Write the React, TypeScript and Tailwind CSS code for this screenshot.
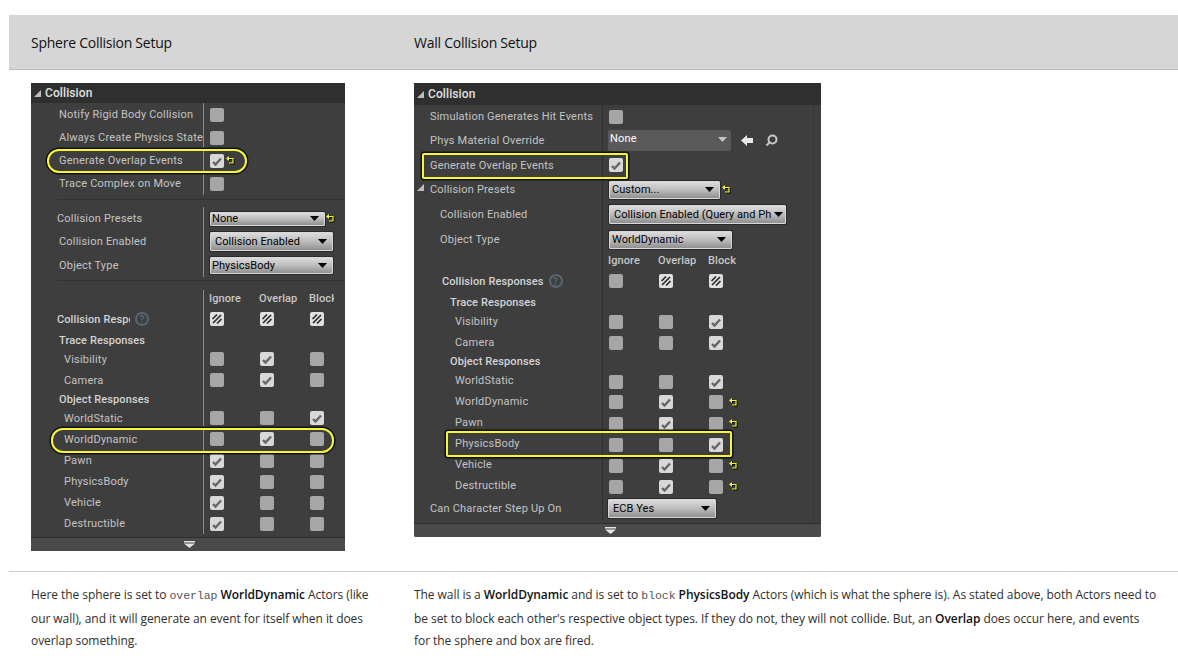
import React from "react";

type RowData = {
  h: number;
  label?: string;
  x?: number;
  dy?: number;
  bold?: boolean;
  tree?: boolean;
  checks?: number[];
  revert?: boolean;
  heads?: boolean;
  help?: boolean;
  clipLabel?: number;
  clipBlock?: boolean;
  control?: React.ReactNode;
};

function Revert({ className = "" }: { className?: string }) {
  return (
    <svg width="9" height="9" viewBox="0 0 9 9" className={`shrink-0 ${className}`} fill="none">
      <path d="M2 2.500H7V7H3" stroke="#000" strokeWidth="1.300" transform="translate(.8 .8)" />
      <path d="M0 2.500 3 0V5z" fill="#000" transform="translate(.6 .6)" />
      <path d="M0 2.500 3 0V5z" fill="#f6f62e" />
      <path d="M2 2.500H7V7H3" stroke="#f6f62e" strokeWidth="1.200" />
    </svg>
  );
}

function Checkbox({ state }: { state: number }) {
  if (state === 2) {
    return (
      <svg width="14" height="14" viewBox="0 0 14 14" className="shrink-0">
        <rect width="14" height="14" rx="2" fill="#e0e0e0" />
        <path d="M2.500 7 7 2.500M3 11 11 3M7 11.500 11.500 7" stroke="#2c2c2c" strokeWidth="1.700" />
      </svg>
    );
  }
  if (state === 1) {
    return (
      <svg width="14" height="14" viewBox="0 0 14 14" className="shrink-0">
        <rect width="14" height="14" rx="2" fill="#d8d8d8" />
        <path d="M3 8 5.500 10.500 11 4.500" stroke="#666666" strokeWidth="2.400" fill="none" />
      </svg>
    );
  }
  return <div className="h-[14px] w-[14px] shrink-0 rounded-[2px] bg-[#a6a6a6]" />;
}

function Caret({ color = "#000" }: { color?: string }) {
  return (
    <svg width="9" height="5" viewBox="0 0 9 5" className="shrink-0">
      <path d="M0 0h9L4.500 5z" fill={color} />
    </svg>
  );
}

function Dropdown({ text, w, h, pl = 2, pr = 5 }: { text: string; w: number; h: number; pl?: number; pr?: number }) {
  return (
    <div
      className="flex shrink-0 items-center justify-between gap-[3px] overflow-hidden whitespace-nowrap rounded-[1px] border border-[#d8d8d8] bg-gradient-to-b from-[#dcdcdc] via-[#bcbcbc] to-[#909090] text-[11px] leading-[13px] tracking-[0.05px] text-black shadow-[0_0_0_1px_#2a2a2a]"
      style={{ width: w, height: h, paddingLeft: pl, paddingRight: pr }}
    >
      <span className="overflow-hidden">{text}</span>
      <Caret />
    </div>
  );
}

function TreeArrow() {
  return (
    <svg width="7" height="7" viewBox="0 0 7 7" className="shrink-0">
      <path d="M7 0v7H0z" fill="#bdbdbd" />
    </svg>
  );
}

function HelpIcon() {
  return (
    <div className="flex h-[14px] w-[14px] shrink-0 items-center justify-center rounded-full border-2 border-[#566673] text-[10px] font-bold text-[#566673]">
      ?
    </div>
  );
}

function Row({ row, labelW, line }: { row: RowData; labelW: number; line: string }) {
  return (
    <div className="flex" style={{ height: row.h }}>
      <div
        className={`relative flex shrink-0 items-center overflow-hidden whitespace-nowrap border-r ${line} ${row.bold ? "font-medium tracking-[0.1px] text-[#d4d4d4]" : "text-[#c4c4c4]"}`}
        style={{ width: labelW, paddingLeft: row.x ?? 0 }}
      >
        {row.tree && (
          <span className="absolute left-[3px] top-[7px]">
            <TreeArrow />
          </span>
        )}
        <span className="overflow-hidden" style={{ width: row.clipLabel, paddingTop: row.dy ?? 1 }}>
          {row.label}
        </span>
        {row.help && (
          <span className="ml-[5px]">
            <HelpIcon />
          </span>
        )}
      </div>
      <div className="flex items-center gap-[36px] pl-[6px]">
        {row.heads && (
          <div className="-ml-[1px] flex pt-[1px] font-medium tracking-[0.1px] text-[#c8c8c8]">
            <span className="w-[50px]">Ignore</span>
            <span className="w-[50px]">Overlap</span>
            <span className={row.clipBlock ? "w-[25px] overflow-hidden" : ""}>Block</span>
          </div>
        )}
        {row.checks?.map((c, i) => <Checkbox key={i} state={c} />)}
        {row.revert && <Revert className="-ml-[30px]" />}
        {row.control}
      </div>
    </div>
  );
}

function PanelHeader({ h }: { h: number }) {
  return (
    <div className="flex items-center gap-[4px] bg-[#2f2f2f] pl-[3px] text-[12px] font-medium tracking-[0.1px] text-[#e0e0e0]" style={{ height: h }}>
      <TreeArrow />
      Collision
    </div>
  );
}

function PanelFooter({ pl }: { pl: number }) {
  return (
    <div className="flex h-[14px] border-t border-[#2e2e2e] bg-[#4a4a4a] pt-[3px]" style={{ paddingLeft: pl }}>
      <svg width="11" height="7" viewBox="0 0 11 7">
        <path d="M0 0h11v1.500H0zM0 2.500h11L5.500 7z" fill="#e4e4e4" />
      </svg>
    </div>
  );
}

function Highlight({ className }: { className: string }) {
  return (
    <div className={`pointer-events-none absolute border-2 border-[#f5f53c] shadow-[0_0_0_1.5px_#111] ${className}`} />
  );
}

const sphereTop: RowData[] = [
  { h: 23, label: "Notify Rigid Body Collision", x: 28, checks: [0] },
  { h: 23, label: "Always Create Physics State", x: 28, checks: [0] },
  { h: 23, label: "Generate Overlap Events", x: 28, checks: [1], control: <Revert className="-ml-[34px]" /> },
  { h: 23, label: "Trace Complex on Move", x: 28, checks: [0] },
];

const sphereMid: RowData[] = [
  {
    h: 23,
    label: "Collision Presets",
    x: 26,
    control: (
      <div className="flex items-center gap-[1px]">
        <Dropdown text="None" w={115} h={14} pl={1} />
        <Revert />
      </div>
    ),
  },
  { h: 23, label: "Collision Enabled", x: 28, control: <Dropdown text="Collision Enabled" w={123} h={19} pl={4} /> },
  { h: 24, label: "Object Type", x: 28, dy: 3, control: <Dropdown text="PhysicsBody" w={123} h={17} pl={1} /> },
];

const sphereBottom: RowData[] = [
  { h: 17, heads: true, clipBlock: true },
  { h: 24, label: "Collision Responses", x: 26, bold: true, help: true, clipLabel: 73, dy: 2, checks: [2, 2, 2] },
  { h: 18, label: "Trace Responses", x: 28, bold: true, dy: 3 },
  { h: 20, label: "Visibility", x: 33, dy: 3, checks: [0, 1, 0] },
  { h: 21, label: "Camera", x: 33, dy: 3, checks: [0, 1, 0] },
  { h: 18, label: "Object Responses", x: 28, bold: true, dy: 3 },
  { h: 20, label: "WorldStatic", x: 33, dy: 3, checks: [0, 0, 1] },
  { h: 22, label: "WorldDynamic", x: 33, dy: 3, checks: [0, 1, 0] },
  { h: 21, label: "Pawn", x: 33, checks: [1, 0, 0] },
  { h: 21, label: "PhysicsBody", x: 33, checks: [1, 0, 0] },
  { h: 21, label: "Vehicle", x: 33, checks: [1, 0, 0] },
  { h: 21, label: "Destructible", x: 33, checks: [1, 0, 0] },
];

const wallRows: RowData[] = [
  { h: 23, label: "Simulation Generates Hit Events", x: 16, checks: [0] },
  {
    h: 24,
    label: "Phys Material Override",
    x: 16,
    dy: 3,
    control: (
      <div className="-ml-[1px] flex items-center">
        <div className="flex h-[21px] w-[123px] items-center justify-between rounded-[2px] bg-[#595959] pl-[2px] pr-[4px] pb-[1px] text-[11px] text-white">
          None
          <Caret color="#c4c4c4" />
        </div>
        <svg width="12" height="11" viewBox="0 0 12 11" className="ml-[10px]">
          <path d="M0 5.500 6 0V3h6v5H6v3z" fill="#e8e8e8" />
        </svg>
        <svg width="13" height="13" viewBox="0 0 13 13" fill="none" className="ml-[12px]">
          <circle cx="7.500" cy="5.500" r="4" stroke="#c8c8c8" strokeWidth="2" />
          <path d="M4.500 8.500 1.500 11.500" stroke="#c8c8c8" strokeWidth="2" />
        </svg>
      </div>
    ),
  },
  { h: 25, label: "Generate Overlap Events", x: 16, dy: 3, checks: [1] },
  {
    h: 25,
    label: "Collision Presets",
    x: 16,
    tree: true,
    control: (
      <div className="flex items-center gap-[2px]">
        <Dropdown text="Custom..." w={111} h={18} />
        <Revert />
      </div>
    ),
  },
  { h: 25, label: "Collision Enabled", x: 26, control: <Dropdown text="Collision Enabled (Query and Physics)" w={177} h={19} pl={4} pr={2} /> },
  { h: 25, label: "Object Type", x: 26, control: <Dropdown text="WorldDynamic" w={123} h={18} /> },
  { h: 18, heads: true },
  { h: 22, label: "Collision Responses", x: 28, bold: true, help: true, dy: 3, checks: [0, 2, 2] },
  { h: 20, label: "Trace Responses", x: 36, bold: true, dy: 3 },
  { h: 20, label: "Visibility", x: 41, checks: [0, 0, 1] },
  { h: 21, label: "Camera", x: 41, checks: [0, 0, 1] },
  { h: 19, label: "Object Responses", x: 36, bold: true, dy: 0 },
  { h: 19, label: "WorldStatic", x: 41, dy: 0, checks: [0, 0, 1] },
  { h: 22, label: "WorldDynamic", x: 41, checks: [0, 1, 0], revert: true },
  { h: 21, label: "Pawn", x: 41, dy: 0, checks: [0, 1, 0], revert: true },
  { h: 21, label: "PhysicsBody", x: 41, dy: 0, checks: [0, 0, 1] },
  { h: 21, label: "Vehicle", x: 41, dy: 0, checks: [0, 1, 0], revert: true },
  { h: 21, label: "Destructible", x: 41, dy: 0, checks: [0, 1, 0], revert: true },
  { h: 23, label: "Can Character Step Up On", x: 16, control: <div className="-ml-[1px]"><Dropdown text="ECB Yes" w={108} h={19} pl={4} /></div> },
];

function SpherePanel() {
  const line = "border-[#8a8a8a]";
  return (
    <div className="relative h-[468px] w-[314px] bg-[#3e3e3e] font-['Roboto',sans-serif] text-[11px] tracking-[0.2px]">
      <PanelHeader h={20} />
      {sphereTop.map((r) => <Row key={r.label} row={r} labelW={173} line={line} />)}
      <div className="ml-[26px] mt-[3px] h-[2px] border-b border-[#333333]" />
      <div className="mt-[7px]">
        {sphereMid.map((r) => <Row key={r.label} row={r} labelW={173} line={line} />)}
      </div>
      <div className="ml-[26px] mt-[2px] h-[2px] border-b border-[#333333]" />
      <div className="mt-[9px]">
        {sphereBottom.map((r, i) => <Row key={i} row={r} labelW={173} line={line} />)}
      </div>
      <div className="absolute inset-x-0 bottom-0">
        <PanelFooter pl={153} />
      </div>
      <Highlight className="left-[16px] top-[66px] h-[24px] w-[200px] rounded-[12px]" />
      <Highlight className="left-[20px] top-[345px] h-[25px] w-[283px] rounded-[12px]" />
    </div>
  );
}

function WallPanel() {
  const line = "border-[#2e2e2e]";
  return (
    <div className="relative h-[454px] w-[407px] overflow-hidden rounded-b-[2px] bg-[#3e3e3e] font-['Roboto',sans-serif] text-[11px] tracking-[0.2px]">
      <PanelHeader h={22} />
      <div className="h-[418px] w-[400px] border-r border-[#363636]">
        {wallRows.map((r, i) => <Row key={i} row={r} labelW={189} line={line} />)}
      </div>
      <PanelFooter pl={191} />
      <Highlight className="left-[8px] top-[70px] h-[26px] w-[206px] rounded-[2px]" />
      <Highlight className="left-[32px] top-[348px] h-[26px] w-[286px] rounded-[2px]" />
    </div>
  );
}

export default function App() {
  return (
    <div className="min-h-[659px] bg-white pl-[9px] pt-[15px] font-['Open_Sans',sans-serif] text-[12px] tracking-[-0.06px] text-[#2e2e2e]">
      <div className="flex h-[55px] items-center border-b border-[#bdbdbd] bg-[#d6d6d6] pt-[1px] text-[14px] font-medium tracking-[-0.25px] text-[#111111]">
        <div className="w-[383px] pl-[22px]">Sphere Collision Setup</div>
        <div className="pl-[22px]">Wall Collision Setup</div>
      </div>
      <div className="flex h-[502px] border-b border-[#cccccc] pt-[13px]">
        <div className="w-[383px] pl-[22px]">
          <SpherePanel />
        </div>
        <div className="pl-[22px]">
          <WallPanel />
        </div>
      </div>
      <div className="flex pt-[12px] leading-[22.5px]">
        <div className="w-[383px] pl-[22px] pr-[12px]">
          Here the sphere is set to <code className="font-['Liberation_Mono',monospace] text-[11.500px] text-[#555555]">overlap</code>{" "}
          <strong className="font-semibold text-[#111111]">WorldDynamic</strong> Actors (like our wall), and it will generate an event for itself when it does overlap something.
        </div>
        <div className="w-[786px] pl-[22px] pr-[21px]">
          The wall is a <strong className="font-semibold text-[#111111]">WorldDynamic</strong> and is set to{" "}
          <code className="font-['Liberation_Mono',monospace] text-[11.500px] text-[#555555]">block</code>{" "}
          <strong className="font-semibold text-[#111111]">PhysicsBody</strong> Actors (which is what the sphere is). As stated above, both Actors need to be set to block each other's respective object types. If they do not, they will not collide. But, an{" "}
          <strong className="font-semibold text-[#111111]">Overlap</strong> does occur here, and events for the sphere and box are fired.
        </div>
      </div>
    </div>
  );
}
